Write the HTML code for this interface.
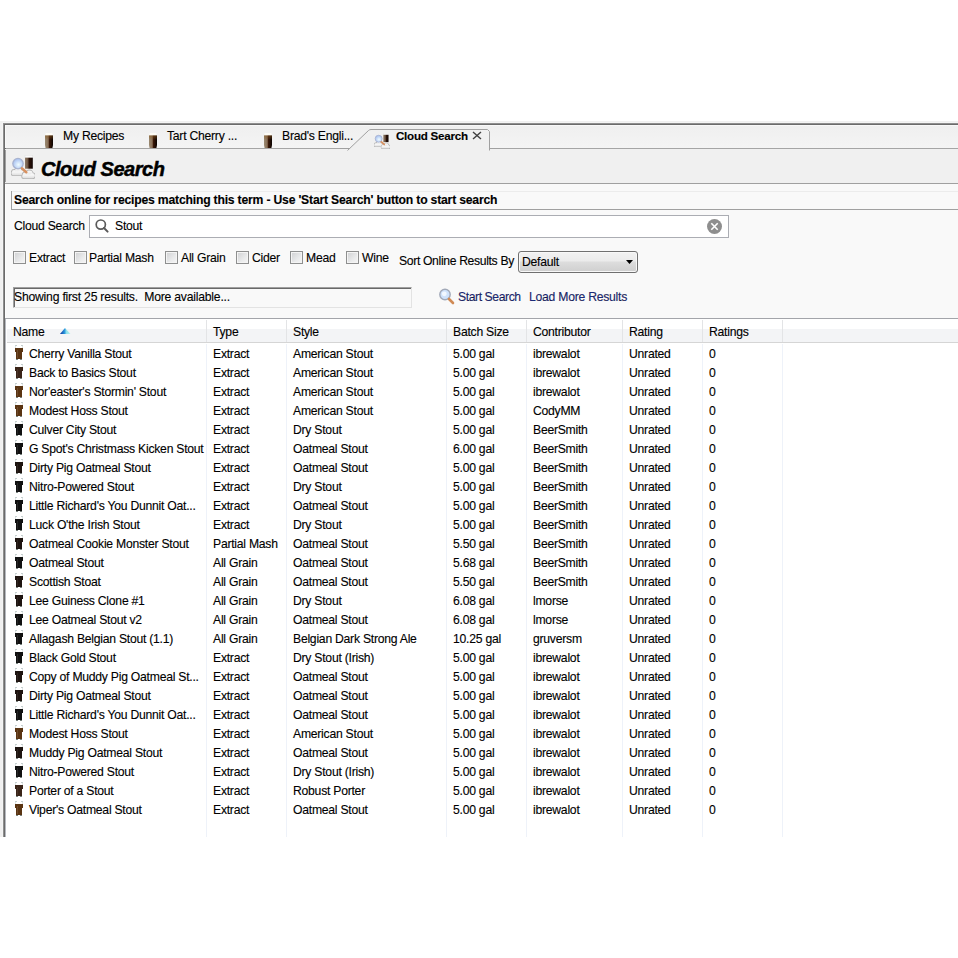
<!DOCTYPE html>
<html><head><meta charset="utf-8">
<style>
html,body{margin:0;padding:0;}
body{width:958px;height:958px;position:relative;overflow:hidden;background:#fff;font-family:"Liberation Sans",sans-serif;font-size:12.2px;letter-spacing:-0.25px;color:#000;}
.ab{position:absolute;}
.t{position:absolute;white-space:pre;line-height:14px;-webkit-text-stroke:0.12px #000;}
.b{font-weight:bold;}
.cb{position:absolute;width:11px;height:11px;border:1px solid #8e8f8f;background:linear-gradient(135deg,#cfd0d2 0%,#e9eaeb 60%,#f6f6f6 100%);box-shadow:inset 0 0 0 1px #f4f4f4;}
</style></head><body>

<div class="ab" style="left:0;top:121px;width:958px;height:716px;background:#f0f0f0"></div>
<div class="ab" style="left:2px;top:122px;width:956px;height:715px;background:#f4f4f4"></div>
<div class="ab" style="left:3px;top:123px;width:955px;height:714px;background:#8f8f8f"></div>
<div class="ab" style="left:4px;top:124px;width:954px;height:713px;background:#6b6b6b"></div>
<div class="ab" style="left:5px;top:125px;width:953px;height:23px;background:linear-gradient(#efefef,#f4f4f4);box-shadow:inset 1px 1px 0 #f8f8f8"></div>
<div class="ab" style="left:6px;top:148px;width:952px;height:1px;background:#a5a5a5"></div>
<div class="ab" style="left:5px;top:149px;width:953px;height:34px;background:#f0f0f0"></div>
<div class="ab" style="left:5px;top:150px;width:1px;height:32px;background:#a0a0a0"></div>
<div class="ab" style="left:5px;top:183px;width:953px;height:1px;background:#a0a0a0"></div>
<div class="ab" style="left:5px;top:184px;width:953px;height:134px;background:#f9f9f9;box-shadow:inset 1px 0 0 #fdfdfd"></div>
<div class="ab" style="left:5px;top:318px;width:953px;height:1px;background:#a3a5aa"></div>
<div class="ab" style="left:5px;top:319px;width:953px;height:518px;background:#fff"></div>
<div class="ab" style="left:5px;top:319px;width:1px;height:518px;background:#b6b9bf"></div>
<svg class="ab" style="left:340px;top:126px" width="160" height="26" viewBox="0 0 160 26">
<path d="M7.5 24.5 L28.5 4.5 Q29.5 3.5 31 3.5 H147.5 L149.5 5.5 V24.5Z" fill="#f0f0f0"/>
<path d="M0 22.5 H9.6 M7.5 24.5 L28.5 4.5 Q29.5 3.5 31 3.5 H147.5 L149.5 5.5 V24.5 M149.5 22.5 H160" fill="none" stroke="#a0a0a0" stroke-width="1"/>
</svg>
<svg class="ab" style="left:45px;top:133px" width="8" height="15" viewBox="0 0 8 15">
<defs><linearGradient id="tb45" x1="0" x2="1"><stop offset="0" stop-color="#9a8a72"/><stop offset=".4" stop-color="#8a7058"/><stop offset=".55" stop-color="#3a1808"/><stop offset="1" stop-color="#0a0301"/></linearGradient>
<linearGradient id="tv45" x1="0" y1="0" x2="0" y2="1"><stop offset="0" stop-color="#8a5a20" stop-opacity=".55"/><stop offset=".35" stop-color="#8a5a20" stop-opacity="0"/></linearGradient></defs>
<rect x="0.5" y="0" width="7" height="2.6" rx="1" fill="#fdfcf6"/>
<path d="M0 2.4 H8 V12 L7.4 15 H0.6 L0 12Z" fill="url(#tb45)"/>
<path d="M0 2.4 H8 V12 L7.4 15 H0.6 L0 12Z" fill="url(#tv45)"/>
</svg>
<svg class="ab" style="left:149px;top:133px" width="8" height="15" viewBox="0 0 8 15">
<defs><linearGradient id="tb149" x1="0" x2="1"><stop offset="0" stop-color="#9a8a72"/><stop offset=".4" stop-color="#8a7058"/><stop offset=".55" stop-color="#3a1808"/><stop offset="1" stop-color="#0a0301"/></linearGradient>
<linearGradient id="tv149" x1="0" y1="0" x2="0" y2="1"><stop offset="0" stop-color="#8a5a20" stop-opacity=".55"/><stop offset=".35" stop-color="#8a5a20" stop-opacity="0"/></linearGradient></defs>
<rect x="0.5" y="0" width="7" height="2.6" rx="1" fill="#fdfcf6"/>
<path d="M0 2.4 H8 V12 L7.4 15 H0.6 L0 12Z" fill="url(#tb149)"/>
<path d="M0 2.4 H8 V12 L7.4 15 H0.6 L0 12Z" fill="url(#tv149)"/>
</svg>
<svg class="ab" style="left:264px;top:133px" width="8" height="15" viewBox="0 0 8 15">
<defs><linearGradient id="tb264" x1="0" x2="1"><stop offset="0" stop-color="#9a8a72"/><stop offset=".4" stop-color="#8a7058"/><stop offset=".55" stop-color="#3a1808"/><stop offset="1" stop-color="#0a0301"/></linearGradient>
<linearGradient id="tv264" x1="0" y1="0" x2="0" y2="1"><stop offset="0" stop-color="#8a5a20" stop-opacity=".55"/><stop offset=".35" stop-color="#8a5a20" stop-opacity="0"/></linearGradient></defs>
<rect x="0.5" y="0" width="7" height="2.6" rx="1" fill="#fdfcf6"/>
<path d="M0 2.4 H8 V12 L7.4 15 H0.6 L0 12Z" fill="url(#tb264)"/>
<path d="M0 2.4 H8 V12 L7.4 15 H0.6 L0 12Z" fill="url(#tv264)"/>
</svg>
<div class="t" style="left:63px;top:129px">My Recipes</div>
<div class="t" style="left:167px;top:129px">Tart Cherry ...</div>
<div class="t" style="left:282px;top:129px">Brad&#39;s Engli...</div>
<div class="t b" style="left:396px;top:129px;font-size:11.6px">Cloud Search</div>
<svg class="ab" style="left:472px;top:131px" width="10" height="10" viewBox="0 0 10 10"><path d="M1 1 L9 8 M9 1 L1 8" stroke="#404040" stroke-width="1.4"/></svg>
<svg class="ab" style="left:11px;top:155px" width="24" height="24" viewBox="0 0 24 24">
<defs><radialGradient id="lg11" cx=".55" cy=".6" r=".6"><stop offset="0" stop-color="#effcff"/><stop offset="1" stop-color="#a3bdf0"/></radialGradient>
<linearGradient id="bg11" x1="0" x2="1"><stop offset="0" stop-color="#8e7a66"/><stop offset=".4" stop-color="#6a5240"/><stop offset=".5" stop-color="#2e1408"/><stop offset="1" stop-color="#120604"/></linearGradient>
<linearGradient id="cg11" x1="0" y1="0" x2="0" y2="1"><stop offset="0" stop-color="#fafafa"/><stop offset="1" stop-color="#dedede"/></linearGradient></defs>
<circle cx="3.2" cy="17.3" r="3.3" fill="#b4b4b4"/><circle cx="7.2" cy="16.2" r="4.1000000000000005" fill="#b4b4b4"/><circle cx="10.6" cy="17.6" r="3.3" fill="#b4b4b4"/><rect x="-0.30000000000000004" y="16.6" width="14.200000000000001" height="4.5" rx="2.7" fill="#b4b4b4"/><circle cx="3.2" cy="17.3" r="2.4" fill="url(#cg11)"/><circle cx="7.2" cy="16.2" r="3.2" fill="url(#cg11)"/><circle cx="10.6" cy="17.6" r="2.4" fill="url(#cg11)"/><rect x="0.6" y="16.6" width="12.4" height="3.6" rx="1.8" fill="url(#cg11)"/>
<rect x="14" y="0.3" width="7.8" height="2.5" fill="#fbfbfb" stroke="#dcdcdc" stroke-width=".4"/>
<rect x="14" y="2.7" width="7.8" height="11" fill="url(#bg11)"/>
<circle cx="14.2" cy="20.0" r="3.5" fill="#b4b4b4"/><circle cx="18.3" cy="18.8" r="4.3" fill="#b4b4b4"/><circle cx="21.6" cy="20.6" r="3.1999999999999997" fill="#b4b4b4"/><rect x="10.299999999999999" y="19.6" width="14.0" height="4.5" rx="2.7" fill="#b4b4b4"/><circle cx="14.2" cy="20.0" r="2.6" fill="url(#cg11)"/><circle cx="18.3" cy="18.8" r="3.4" fill="url(#cg11)"/><circle cx="21.6" cy="20.6" r="2.3" fill="url(#cg11)"/><rect x="11.2" y="19.6" width="12.2" height="3.6" rx="1.8" fill="url(#cg11)"/>
<circle cx="7" cy="8.6" r="5.2" fill="url(#lg11)" stroke="#a9b3cf" stroke-width="1.3"/>
<path d="M11 13.4 L15.3 17.2" stroke="#d89160" stroke-width="2.6" stroke-linecap="round"/>
</svg>
<svg class="ab" style="left:374px;top:133px" width="16.000799999999998" height="16.000799999999998" viewBox="0 0 24 24">
<defs><radialGradient id="lg374" cx=".55" cy=".6" r=".6"><stop offset="0" stop-color="#effcff"/><stop offset="1" stop-color="#a3bdf0"/></radialGradient>
<linearGradient id="bg374" x1="0" x2="1"><stop offset="0" stop-color="#8e7a66"/><stop offset=".4" stop-color="#6a5240"/><stop offset=".5" stop-color="#2e1408"/><stop offset="1" stop-color="#120604"/></linearGradient>
<linearGradient id="cg374" x1="0" y1="0" x2="0" y2="1"><stop offset="0" stop-color="#fafafa"/><stop offset="1" stop-color="#dedede"/></linearGradient></defs>
<circle cx="3.2" cy="17.3" r="3.3" fill="#b4b4b4"/><circle cx="7.2" cy="16.2" r="4.1000000000000005" fill="#b4b4b4"/><circle cx="10.6" cy="17.6" r="3.3" fill="#b4b4b4"/><rect x="-0.30000000000000004" y="16.6" width="14.200000000000001" height="4.5" rx="2.7" fill="#b4b4b4"/><circle cx="3.2" cy="17.3" r="2.4" fill="url(#cg374)"/><circle cx="7.2" cy="16.2" r="3.2" fill="url(#cg374)"/><circle cx="10.6" cy="17.6" r="2.4" fill="url(#cg374)"/><rect x="0.6" y="16.6" width="12.4" height="3.6" rx="1.8" fill="url(#cg374)"/>
<rect x="14" y="0.3" width="7.8" height="2.5" fill="#fbfbfb" stroke="#dcdcdc" stroke-width=".4"/>
<rect x="14" y="2.7" width="7.8" height="11" fill="url(#bg374)"/>
<circle cx="14.2" cy="20.0" r="3.5" fill="#b4b4b4"/><circle cx="18.3" cy="18.8" r="4.3" fill="#b4b4b4"/><circle cx="21.6" cy="20.6" r="3.1999999999999997" fill="#b4b4b4"/><rect x="10.299999999999999" y="19.6" width="14.0" height="4.5" rx="2.7" fill="#b4b4b4"/><circle cx="14.2" cy="20.0" r="2.6" fill="url(#cg374)"/><circle cx="18.3" cy="18.8" r="3.4" fill="url(#cg374)"/><circle cx="21.6" cy="20.6" r="2.3" fill="url(#cg374)"/><rect x="11.2" y="19.6" width="12.2" height="3.6" rx="1.8" fill="url(#cg374)"/>
<circle cx="7" cy="8.6" r="5.2" fill="url(#lg374)" stroke="#a9b3cf" stroke-width="1.3"/>
<path d="M11 13.4 L15.3 17.2" stroke="#d89160" stroke-width="2.6" stroke-linecap="round"/>
</svg>
<div class="t b" style="left:41px;top:158px;font-size:20px;line-height:22px;font-style:italic;letter-spacing:-0.45px;-webkit-text-stroke:0.5px #000">Cloud Search</div>
<div class="ab" style="left:11px;top:191px;width:947px;height:1px;background:#ececec"></div>
<div class="ab" style="left:11px;top:191px;width:1px;height:18px;background:#a0a0a0"></div>
<div class="ab" style="left:11px;top:209px;width:947px;height:1px;background:#a0a0a0"></div>
<div class="t b" style="left:14px;top:193px;letter-spacing:-0.2px">Search online for recipes matching this term - Use &#39;Start Search&#39; button to start search</div>
<div class="t" style="left:14px;top:219px">Cloud Search</div>
<div class="ab" style="left:89px;top:215px;width:638px;height:21px;border:1px solid #abadb3;background:#fff"></div>
<svg class="ab" style="left:94px;top:218px" width="16" height="16" viewBox="0 0 16 16">
<circle cx="6.8" cy="6.6" r="4.6" fill="none" stroke="#5a5a5a" stroke-width="1.7"/>
<path d="M10 10 L13.6 13.6" stroke="#5a5a5a" stroke-width="2" stroke-linecap="round"/></svg>
<div class="t" style="left:115px;top:219px">Stout</div>
<svg class="ab" style="left:706px;top:218px" width="17" height="17" viewBox="0 0 17 17">
<circle cx="8.5" cy="8.5" r="7.5" fill="#8e8e8e"/>
<path d="M5.3 5.3 L11.7 11.7 M11.7 5.3 L5.3 11.7" stroke="#fff" stroke-width="1.6"/></svg>
<div class="cb" style="left:13px;top:251px"></div>
<div class="t" style="left:29px;top:251px">Extract</div>
<div class="cb" style="left:74px;top:251px"></div>
<div class="t" style="left:89px;top:251px">Partial Mash</div>
<div class="cb" style="left:165px;top:251px"></div>
<div class="t" style="left:181px;top:251px">All Grain</div>
<div class="cb" style="left:236px;top:251px"></div>
<div class="t" style="left:252px;top:251px">Cider</div>
<div class="cb" style="left:290px;top:251px"></div>
<div class="t" style="left:306px;top:251px">Mead</div>
<div class="cb" style="left:346px;top:251px"></div>
<div class="t" style="left:362px;top:251px">Wine</div>
<div class="t" style="left:399px;top:254px;letter-spacing:-0.35px">Sort Online Results By</div>
<div class="ab" style="left:518px;top:251px;width:118px;height:20px;border:1px solid #707070;border-radius:3px;background:linear-gradient(#f2f2f2 0%,#ebebeb 45%,#dddddd 50%,#cfcfcf 100%);box-shadow:inset 0 0 0 1px #f8f8f8"></div>
<div class="t" style="left:522px;top:255px">Default</div>
<svg class="ab" style="left:626px;top:260px" width="7" height="4" viewBox="0 0 7 4"><path d="M0 0H7L3.5 4Z" fill="#000"/></svg>
<div class="ab" style="left:13px;top:287px;width:397px;height:19px;border-top:1px solid #a0a0a0;border-left:1px solid #a0a0a0;border-bottom:1px solid #e3e3e3;border-right:1px solid #e3e3e3;background:#f9f9f9;box-shadow:inset 1px 1px 0 #696969"></div>
<div class="t" style="left:14px;top:290px;letter-spacing:-0.22px">Showing first 25 results.  More available...</div>
<svg class="ab" style="left:438px;top:288px" width="17" height="17" viewBox="0 0 17 17">
<circle cx="7" cy="6.5" r="5.2" fill="#cfe2fb" stroke="#a2a9b8" stroke-width="1.4"/>
<circle cx="6.3" cy="5.8" r="2.4" fill="#f2f8ff"/>
<path d="M11 11 L15 15" stroke="#d08a55" stroke-width="2.6" stroke-linecap="round"/></svg>
<div class="t" style="left:458px;top:290px;color:#1b2a78;letter-spacing:-0.42px">Start Search</div>
<div class="t" style="left:529px;top:290px;color:#1b2a78">Load More Results</div>
<div class="ab" style="left:7px;top:319px;width:951px;height:23px;background:#fff"></div>
<div class="ab" style="left:7px;top:329px;width:951px;height:13px;background:#f3f4f6"></div>
<div class="ab" style="left:7px;top:342px;width:951px;height:1px;background:#d5d5d5"></div>
<div class="ab" style="left:206px;top:320px;width:1px;height:22px;background:#e3e4e6"></div>
<div class="ab" style="left:206px;top:344px;width:1px;height:493px;background:#eef2f9"></div>
<div class="ab" style="left:286px;top:320px;width:1px;height:22px;background:#e3e4e6"></div>
<div class="ab" style="left:286px;top:344px;width:1px;height:493px;background:#eef2f9"></div>
<div class="ab" style="left:446px;top:320px;width:1px;height:22px;background:#e3e4e6"></div>
<div class="ab" style="left:446px;top:344px;width:1px;height:493px;background:#eef2f9"></div>
<div class="ab" style="left:526px;top:320px;width:1px;height:22px;background:#e3e4e6"></div>
<div class="ab" style="left:526px;top:344px;width:1px;height:493px;background:#eef2f9"></div>
<div class="ab" style="left:622px;top:320px;width:1px;height:22px;background:#e3e4e6"></div>
<div class="ab" style="left:622px;top:344px;width:1px;height:493px;background:#eef2f9"></div>
<div class="ab" style="left:702px;top:320px;width:1px;height:22px;background:#e3e4e6"></div>
<div class="ab" style="left:702px;top:344px;width:1px;height:493px;background:#eef2f9"></div>
<div class="ab" style="left:782px;top:320px;width:1px;height:22px;background:#e3e4e6"></div>
<div class="ab" style="left:782px;top:344px;width:1px;height:493px;background:#eef2f9"></div>
<div class="t" style="left:13px;top:325px">Name</div>
<div class="t" style="left:213px;top:325px">Type</div>
<div class="t" style="left:293px;top:325px">Style</div>
<div class="t" style="left:453px;top:325px">Batch Size</div>
<div class="t" style="left:533px;top:325px">Contributor</div>
<div class="t" style="left:629px;top:325px">Rating</div>
<div class="t" style="left:709px;top:325px">Ratings</div>
<svg class="ab" style="left:60px;top:327px" width="11" height="8" viewBox="0 0 11 8"><defs><linearGradient id="sa" x1="0" x2="1"><stop offset="0" stop-color="#0a2f9a"/><stop offset=".45" stop-color="#2d9be0"/><stop offset=".6" stop-color="#8fe0ea"/><stop offset="1" stop-color="#b9f2ee"/></linearGradient></defs><path d="M0 7 L5 1 L10.5 7Z" fill="url(#sa)"/></svg>
<svg class="ab" style="left:15px;top:345px" width="8" height="15" viewBox="0 0 8 15">
<rect x="0" y="0" width="8" height="3" fill="#fff"/><rect x="0" y="0" width="2" height="1" fill="#c5cfcf"/><rect x="6" y="0" width="2" height="1" fill="#c5cfcf"/><rect x="0" y="1" width="1" height="2" fill="#dfe5e5"/><rect x="7" y="1" width="1" height="2" fill="#dfe5e5"/>
<rect x="0" y="3" width="8" height="4" fill="#5a3412"/><rect x="1" y="7" width="6" height="7" fill="#5a3412"/>
<rect x="2" y="5" width="1" height="8" fill="#6e4a2c"/>
<rect x="1" y="14" width="2" height="1" fill="#7a8480"/><rect x="5" y="14" width="2" height="1" fill="#7a8480"/>
</svg>
<div class="t" style="left:29px;top:347px">Cherry Vanilla Stout</div>
<div class="t" style="left:213px;top:347px">Extract</div>
<div class="t" style="left:293px;top:347px">American Stout</div>
<div class="t" style="left:453px;top:347px">5.00 gal</div>
<div class="t" style="left:533px;top:347px">ibrewalot</div>
<div class="t" style="left:629px;top:347px">Unrated</div>
<div class="t" style="left:709px;top:347px">0</div>
<svg class="ab" style="left:15px;top:364px" width="8" height="15" viewBox="0 0 8 15">
<rect x="0" y="0" width="8" height="3" fill="#fff"/><rect x="0" y="0" width="2" height="1" fill="#c5cfcf"/><rect x="6" y="0" width="2" height="1" fill="#c5cfcf"/><rect x="0" y="1" width="1" height="2" fill="#dfe5e5"/><rect x="7" y="1" width="1" height="2" fill="#dfe5e5"/>
<rect x="0" y="3" width="8" height="4" fill="#3a2418"/><rect x="1" y="7" width="6" height="7" fill="#3a2418"/>
<rect x="2" y="5" width="1" height="8" fill="#4a3428"/>
<rect x="1" y="14" width="2" height="1" fill="#7a8480"/><rect x="5" y="14" width="2" height="1" fill="#7a8480"/>
</svg>
<div class="t" style="left:29px;top:366px">Back to Basics Stout</div>
<div class="t" style="left:213px;top:366px">Extract</div>
<div class="t" style="left:293px;top:366px">American Stout</div>
<div class="t" style="left:453px;top:366px">5.00 gal</div>
<div class="t" style="left:533px;top:366px">ibrewalot</div>
<div class="t" style="left:629px;top:366px">Unrated</div>
<div class="t" style="left:709px;top:366px">0</div>
<svg class="ab" style="left:15px;top:383px" width="8" height="15" viewBox="0 0 8 15">
<rect x="0" y="0" width="8" height="3" fill="#fff"/><rect x="0" y="0" width="2" height="1" fill="#c5cfcf"/><rect x="6" y="0" width="2" height="1" fill="#c5cfcf"/><rect x="0" y="1" width="1" height="2" fill="#dfe5e5"/><rect x="7" y="1" width="1" height="2" fill="#dfe5e5"/>
<rect x="0" y="3" width="8" height="4" fill="#5a3412"/><rect x="1" y="7" width="6" height="7" fill="#5a3412"/>
<rect x="2" y="5" width="1" height="8" fill="#6e4a2c"/>
<rect x="1" y="14" width="2" height="1" fill="#7a8480"/><rect x="5" y="14" width="2" height="1" fill="#7a8480"/>
</svg>
<div class="t" style="left:29px;top:385px">Nor&#39;easter&#39;s Stormin&#39; Stout</div>
<div class="t" style="left:213px;top:385px">Extract</div>
<div class="t" style="left:293px;top:385px">American Stout</div>
<div class="t" style="left:453px;top:385px">5.00 gal</div>
<div class="t" style="left:533px;top:385px">ibrewalot</div>
<div class="t" style="left:629px;top:385px">Unrated</div>
<div class="t" style="left:709px;top:385px">0</div>
<svg class="ab" style="left:15px;top:402px" width="8" height="15" viewBox="0 0 8 15">
<rect x="0" y="0" width="8" height="3" fill="#fff"/><rect x="0" y="0" width="2" height="1" fill="#c5cfcf"/><rect x="6" y="0" width="2" height="1" fill="#c5cfcf"/><rect x="0" y="1" width="1" height="2" fill="#dfe5e5"/><rect x="7" y="1" width="1" height="2" fill="#dfe5e5"/>
<rect x="0" y="3" width="8" height="4" fill="#5a3412"/><rect x="1" y="7" width="6" height="7" fill="#5a3412"/>
<rect x="2" y="5" width="1" height="8" fill="#6e4a2c"/>
<rect x="1" y="14" width="2" height="1" fill="#7a8480"/><rect x="5" y="14" width="2" height="1" fill="#7a8480"/>
</svg>
<div class="t" style="left:29px;top:404px">Modest Hoss Stout</div>
<div class="t" style="left:213px;top:404px">Extract</div>
<div class="t" style="left:293px;top:404px">American Stout</div>
<div class="t" style="left:453px;top:404px">5.00 gal</div>
<div class="t" style="left:533px;top:404px">CodyMM</div>
<div class="t" style="left:629px;top:404px">Unrated</div>
<div class="t" style="left:709px;top:404px">0</div>
<svg class="ab" style="left:15px;top:421px" width="8" height="15" viewBox="0 0 8 15">
<rect x="0" y="0" width="8" height="3" fill="#fff"/><rect x="0" y="0" width="2" height="1" fill="#c5cfcf"/><rect x="6" y="0" width="2" height="1" fill="#c5cfcf"/><rect x="0" y="1" width="1" height="2" fill="#dfe5e5"/><rect x="7" y="1" width="1" height="2" fill="#dfe5e5"/>
<rect x="0" y="3" width="8" height="4" fill="#111111"/><rect x="1" y="7" width="6" height="7" fill="#111111"/>
<rect x="2" y="5" width="1" height="8" fill="#262626"/>
<rect x="1" y="14" width="2" height="1" fill="#7a8480"/><rect x="5" y="14" width="2" height="1" fill="#7a8480"/>
</svg>
<div class="t" style="left:29px;top:423px">Culver City Stout</div>
<div class="t" style="left:213px;top:423px">Extract</div>
<div class="t" style="left:293px;top:423px">Dry Stout</div>
<div class="t" style="left:453px;top:423px">5.00 gal</div>
<div class="t" style="left:533px;top:423px">BeerSmith</div>
<div class="t" style="left:629px;top:423px">Unrated</div>
<div class="t" style="left:709px;top:423px">0</div>
<svg class="ab" style="left:15px;top:440px" width="8" height="15" viewBox="0 0 8 15">
<rect x="0" y="0" width="8" height="3" fill="#fff"/><rect x="0" y="0" width="2" height="1" fill="#c5cfcf"/><rect x="6" y="0" width="2" height="1" fill="#c5cfcf"/><rect x="0" y="1" width="1" height="2" fill="#dfe5e5"/><rect x="7" y="1" width="1" height="2" fill="#dfe5e5"/>
<rect x="0" y="3" width="8" height="4" fill="#111111"/><rect x="1" y="7" width="6" height="7" fill="#111111"/>
<rect x="2" y="5" width="1" height="8" fill="#262626"/>
<rect x="1" y="14" width="2" height="1" fill="#7a8480"/><rect x="5" y="14" width="2" height="1" fill="#7a8480"/>
</svg>
<div class="t" style="left:29px;top:442px">G Spot&#39;s Christmass Kicken Stout</div>
<div class="t" style="left:213px;top:442px">Extract</div>
<div class="t" style="left:293px;top:442px">Oatmeal Stout</div>
<div class="t" style="left:453px;top:442px">6.00 gal</div>
<div class="t" style="left:533px;top:442px">BeerSmith</div>
<div class="t" style="left:629px;top:442px">Unrated</div>
<div class="t" style="left:709px;top:442px">0</div>
<svg class="ab" style="left:15px;top:459px" width="8" height="15" viewBox="0 0 8 15">
<rect x="0" y="0" width="8" height="3" fill="#fff"/><rect x="0" y="0" width="2" height="1" fill="#c5cfcf"/><rect x="6" y="0" width="2" height="1" fill="#c5cfcf"/><rect x="0" y="1" width="1" height="2" fill="#dfe5e5"/><rect x="7" y="1" width="1" height="2" fill="#dfe5e5"/>
<rect x="0" y="3" width="8" height="4" fill="#1e1410"/><rect x="1" y="7" width="6" height="7" fill="#1e1410"/>
<rect x="2" y="5" width="1" height="8" fill="#2e2420"/>
<rect x="1" y="14" width="2" height="1" fill="#7a8480"/><rect x="5" y="14" width="2" height="1" fill="#7a8480"/>
</svg>
<div class="t" style="left:29px;top:461px">Dirty Pig Oatmeal Stout</div>
<div class="t" style="left:213px;top:461px">Extract</div>
<div class="t" style="left:293px;top:461px">Oatmeal Stout</div>
<div class="t" style="left:453px;top:461px">5.00 gal</div>
<div class="t" style="left:533px;top:461px">BeerSmith</div>
<div class="t" style="left:629px;top:461px">Unrated</div>
<div class="t" style="left:709px;top:461px">0</div>
<svg class="ab" style="left:15px;top:478px" width="8" height="15" viewBox="0 0 8 15">
<rect x="0" y="0" width="8" height="3" fill="#fff"/><rect x="0" y="0" width="2" height="1" fill="#c5cfcf"/><rect x="6" y="0" width="2" height="1" fill="#c5cfcf"/><rect x="0" y="1" width="1" height="2" fill="#dfe5e5"/><rect x="7" y="1" width="1" height="2" fill="#dfe5e5"/>
<rect x="0" y="3" width="8" height="4" fill="#111111"/><rect x="1" y="7" width="6" height="7" fill="#111111"/>
<rect x="2" y="5" width="1" height="8" fill="#262626"/>
<rect x="1" y="14" width="2" height="1" fill="#7a8480"/><rect x="5" y="14" width="2" height="1" fill="#7a8480"/>
</svg>
<div class="t" style="left:29px;top:480px">Nitro-Powered Stout</div>
<div class="t" style="left:213px;top:480px">Extract</div>
<div class="t" style="left:293px;top:480px">Dry Stout</div>
<div class="t" style="left:453px;top:480px">5.00 gal</div>
<div class="t" style="left:533px;top:480px">BeerSmith</div>
<div class="t" style="left:629px;top:480px">Unrated</div>
<div class="t" style="left:709px;top:480px">0</div>
<svg class="ab" style="left:15px;top:497px" width="8" height="15" viewBox="0 0 8 15">
<rect x="0" y="0" width="8" height="3" fill="#fff"/><rect x="0" y="0" width="2" height="1" fill="#c5cfcf"/><rect x="6" y="0" width="2" height="1" fill="#c5cfcf"/><rect x="0" y="1" width="1" height="2" fill="#dfe5e5"/><rect x="7" y="1" width="1" height="2" fill="#dfe5e5"/>
<rect x="0" y="3" width="8" height="4" fill="#111111"/><rect x="1" y="7" width="6" height="7" fill="#111111"/>
<rect x="2" y="5" width="1" height="8" fill="#262626"/>
<rect x="1" y="14" width="2" height="1" fill="#7a8480"/><rect x="5" y="14" width="2" height="1" fill="#7a8480"/>
</svg>
<div class="t" style="left:29px;top:499px">Little Richard&#39;s You Dunnit Oat...</div>
<div class="t" style="left:213px;top:499px">Extract</div>
<div class="t" style="left:293px;top:499px">Oatmeal Stout</div>
<div class="t" style="left:453px;top:499px">5.00 gal</div>
<div class="t" style="left:533px;top:499px">BeerSmith</div>
<div class="t" style="left:629px;top:499px">Unrated</div>
<div class="t" style="left:709px;top:499px">0</div>
<svg class="ab" style="left:15px;top:516px" width="8" height="15" viewBox="0 0 8 15">
<rect x="0" y="0" width="8" height="3" fill="#fff"/><rect x="0" y="0" width="2" height="1" fill="#c5cfcf"/><rect x="6" y="0" width="2" height="1" fill="#c5cfcf"/><rect x="0" y="1" width="1" height="2" fill="#dfe5e5"/><rect x="7" y="1" width="1" height="2" fill="#dfe5e5"/>
<rect x="0" y="3" width="8" height="4" fill="#111111"/><rect x="1" y="7" width="6" height="7" fill="#111111"/>
<rect x="2" y="5" width="1" height="8" fill="#262626"/>
<rect x="1" y="14" width="2" height="1" fill="#7a8480"/><rect x="5" y="14" width="2" height="1" fill="#7a8480"/>
</svg>
<div class="t" style="left:29px;top:518px">Luck O&#39;the Irish Stout</div>
<div class="t" style="left:213px;top:518px">Extract</div>
<div class="t" style="left:293px;top:518px">Dry Stout</div>
<div class="t" style="left:453px;top:518px">5.00 gal</div>
<div class="t" style="left:533px;top:518px">BeerSmith</div>
<div class="t" style="left:629px;top:518px">Unrated</div>
<div class="t" style="left:709px;top:518px">0</div>
<svg class="ab" style="left:15px;top:535px" width="8" height="15" viewBox="0 0 8 15">
<rect x="0" y="0" width="8" height="3" fill="#fff"/><rect x="0" y="0" width="2" height="1" fill="#c5cfcf"/><rect x="6" y="0" width="2" height="1" fill="#c5cfcf"/><rect x="0" y="1" width="1" height="2" fill="#dfe5e5"/><rect x="7" y="1" width="1" height="2" fill="#dfe5e5"/>
<rect x="0" y="3" width="8" height="4" fill="#1e1410"/><rect x="1" y="7" width="6" height="7" fill="#1e1410"/>
<rect x="2" y="5" width="1" height="8" fill="#2e2420"/>
<rect x="1" y="14" width="2" height="1" fill="#7a8480"/><rect x="5" y="14" width="2" height="1" fill="#7a8480"/>
</svg>
<div class="t" style="left:29px;top:537px">Oatmeal Cookie Monster Stout</div>
<div class="t" style="left:213px;top:537px">Partial Mash</div>
<div class="t" style="left:293px;top:537px">Oatmeal Stout</div>
<div class="t" style="left:453px;top:537px">5.50 gal</div>
<div class="t" style="left:533px;top:537px">BeerSmith</div>
<div class="t" style="left:629px;top:537px">Unrated</div>
<div class="t" style="left:709px;top:537px">0</div>
<svg class="ab" style="left:15px;top:554px" width="8" height="15" viewBox="0 0 8 15">
<rect x="0" y="0" width="8" height="3" fill="#fff"/><rect x="0" y="0" width="2" height="1" fill="#c5cfcf"/><rect x="6" y="0" width="2" height="1" fill="#c5cfcf"/><rect x="0" y="1" width="1" height="2" fill="#dfe5e5"/><rect x="7" y="1" width="1" height="2" fill="#dfe5e5"/>
<rect x="0" y="3" width="8" height="4" fill="#111111"/><rect x="1" y="7" width="6" height="7" fill="#111111"/>
<rect x="2" y="5" width="1" height="8" fill="#262626"/>
<rect x="1" y="14" width="2" height="1" fill="#7a8480"/><rect x="5" y="14" width="2" height="1" fill="#7a8480"/>
</svg>
<div class="t" style="left:29px;top:556px">Oatmeal Stout</div>
<div class="t" style="left:213px;top:556px">All Grain</div>
<div class="t" style="left:293px;top:556px">Oatmeal Stout</div>
<div class="t" style="left:453px;top:556px">5.68 gal</div>
<div class="t" style="left:533px;top:556px">BeerSmith</div>
<div class="t" style="left:629px;top:556px">Unrated</div>
<div class="t" style="left:709px;top:556px">0</div>
<svg class="ab" style="left:15px;top:573px" width="8" height="15" viewBox="0 0 8 15">
<rect x="0" y="0" width="8" height="3" fill="#fff"/><rect x="0" y="0" width="2" height="1" fill="#c5cfcf"/><rect x="6" y="0" width="2" height="1" fill="#c5cfcf"/><rect x="0" y="1" width="1" height="2" fill="#dfe5e5"/><rect x="7" y="1" width="1" height="2" fill="#dfe5e5"/>
<rect x="0" y="3" width="8" height="4" fill="#1e1410"/><rect x="1" y="7" width="6" height="7" fill="#1e1410"/>
<rect x="2" y="5" width="1" height="8" fill="#2e2420"/>
<rect x="1" y="14" width="2" height="1" fill="#7a8480"/><rect x="5" y="14" width="2" height="1" fill="#7a8480"/>
</svg>
<div class="t" style="left:29px;top:575px">Scottish Stoat</div>
<div class="t" style="left:213px;top:575px">All Grain</div>
<div class="t" style="left:293px;top:575px">Oatmeal Stout</div>
<div class="t" style="left:453px;top:575px">5.50 gal</div>
<div class="t" style="left:533px;top:575px">BeerSmith</div>
<div class="t" style="left:629px;top:575px">Unrated</div>
<div class="t" style="left:709px;top:575px">0</div>
<svg class="ab" style="left:15px;top:592px" width="8" height="15" viewBox="0 0 8 15">
<rect x="0" y="0" width="8" height="3" fill="#fff"/><rect x="0" y="0" width="2" height="1" fill="#c5cfcf"/><rect x="6" y="0" width="2" height="1" fill="#c5cfcf"/><rect x="0" y="1" width="1" height="2" fill="#dfe5e5"/><rect x="7" y="1" width="1" height="2" fill="#dfe5e5"/>
<rect x="0" y="3" width="8" height="4" fill="#1e1410"/><rect x="1" y="7" width="6" height="7" fill="#1e1410"/>
<rect x="2" y="5" width="1" height="8" fill="#2e2420"/>
<rect x="1" y="14" width="2" height="1" fill="#7a8480"/><rect x="5" y="14" width="2" height="1" fill="#7a8480"/>
</svg>
<div class="t" style="left:29px;top:594px">Lee Guiness Clone #1</div>
<div class="t" style="left:213px;top:594px">All Grain</div>
<div class="t" style="left:293px;top:594px">Dry Stout</div>
<div class="t" style="left:453px;top:594px">6.08 gal</div>
<div class="t" style="left:533px;top:594px">lmorse</div>
<div class="t" style="left:629px;top:594px">Unrated</div>
<div class="t" style="left:709px;top:594px">0</div>
<svg class="ab" style="left:15px;top:611px" width="8" height="15" viewBox="0 0 8 15">
<rect x="0" y="0" width="8" height="3" fill="#fff"/><rect x="0" y="0" width="2" height="1" fill="#c5cfcf"/><rect x="6" y="0" width="2" height="1" fill="#c5cfcf"/><rect x="0" y="1" width="1" height="2" fill="#dfe5e5"/><rect x="7" y="1" width="1" height="2" fill="#dfe5e5"/>
<rect x="0" y="3" width="8" height="4" fill="#111111"/><rect x="1" y="7" width="6" height="7" fill="#111111"/>
<rect x="2" y="5" width="1" height="8" fill="#262626"/>
<rect x="1" y="14" width="2" height="1" fill="#7a8480"/><rect x="5" y="14" width="2" height="1" fill="#7a8480"/>
</svg>
<div class="t" style="left:29px;top:613px">Lee Oatmeal Stout v2</div>
<div class="t" style="left:213px;top:613px">All Grain</div>
<div class="t" style="left:293px;top:613px">Oatmeal Stout</div>
<div class="t" style="left:453px;top:613px">6.08 gal</div>
<div class="t" style="left:533px;top:613px">lmorse</div>
<div class="t" style="left:629px;top:613px">Unrated</div>
<div class="t" style="left:709px;top:613px">0</div>
<svg class="ab" style="left:15px;top:630px" width="8" height="15" viewBox="0 0 8 15">
<rect x="0" y="0" width="8" height="3" fill="#fff"/><rect x="0" y="0" width="2" height="1" fill="#c5cfcf"/><rect x="6" y="0" width="2" height="1" fill="#c5cfcf"/><rect x="0" y="1" width="1" height="2" fill="#dfe5e5"/><rect x="7" y="1" width="1" height="2" fill="#dfe5e5"/>
<rect x="0" y="3" width="8" height="4" fill="#111111"/><rect x="1" y="7" width="6" height="7" fill="#111111"/>
<rect x="2" y="5" width="1" height="8" fill="#262626"/>
<rect x="1" y="14" width="2" height="1" fill="#7a8480"/><rect x="5" y="14" width="2" height="1" fill="#7a8480"/>
</svg>
<div class="t" style="left:29px;top:632px">Allagash Belgian Stout (1.1)</div>
<div class="t" style="left:213px;top:632px">All Grain</div>
<div class="t" style="left:293px;top:632px">Belgian Dark Strong Ale</div>
<div class="t" style="left:453px;top:632px">10.25 gal</div>
<div class="t" style="left:533px;top:632px">gruversm</div>
<div class="t" style="left:629px;top:632px">Unrated</div>
<div class="t" style="left:709px;top:632px">0</div>
<svg class="ab" style="left:15px;top:649px" width="8" height="15" viewBox="0 0 8 15">
<rect x="0" y="0" width="8" height="3" fill="#fff"/><rect x="0" y="0" width="2" height="1" fill="#c5cfcf"/><rect x="6" y="0" width="2" height="1" fill="#c5cfcf"/><rect x="0" y="1" width="1" height="2" fill="#dfe5e5"/><rect x="7" y="1" width="1" height="2" fill="#dfe5e5"/>
<rect x="0" y="3" width="8" height="4" fill="#111111"/><rect x="1" y="7" width="6" height="7" fill="#111111"/>
<rect x="2" y="5" width="1" height="8" fill="#262626"/>
<rect x="1" y="14" width="2" height="1" fill="#7a8480"/><rect x="5" y="14" width="2" height="1" fill="#7a8480"/>
</svg>
<div class="t" style="left:29px;top:651px">Black Gold Stout</div>
<div class="t" style="left:213px;top:651px">Extract</div>
<div class="t" style="left:293px;top:651px">Dry Stout (Irish)</div>
<div class="t" style="left:453px;top:651px">5.00 gal</div>
<div class="t" style="left:533px;top:651px">ibrewalot</div>
<div class="t" style="left:629px;top:651px">Unrated</div>
<div class="t" style="left:709px;top:651px">0</div>
<svg class="ab" style="left:15px;top:668px" width="8" height="15" viewBox="0 0 8 15">
<rect x="0" y="0" width="8" height="3" fill="#fff"/><rect x="0" y="0" width="2" height="1" fill="#c5cfcf"/><rect x="6" y="0" width="2" height="1" fill="#c5cfcf"/><rect x="0" y="1" width="1" height="2" fill="#dfe5e5"/><rect x="7" y="1" width="1" height="2" fill="#dfe5e5"/>
<rect x="0" y="3" width="8" height="4" fill="#1e1410"/><rect x="1" y="7" width="6" height="7" fill="#1e1410"/>
<rect x="2" y="5" width="1" height="8" fill="#2e2420"/>
<rect x="1" y="14" width="2" height="1" fill="#7a8480"/><rect x="5" y="14" width="2" height="1" fill="#7a8480"/>
</svg>
<div class="t" style="left:29px;top:670px">Copy of Muddy Pig Oatmeal St...</div>
<div class="t" style="left:213px;top:670px">Extract</div>
<div class="t" style="left:293px;top:670px">Oatmeal Stout</div>
<div class="t" style="left:453px;top:670px">5.00 gal</div>
<div class="t" style="left:533px;top:670px">ibrewalot</div>
<div class="t" style="left:629px;top:670px">Unrated</div>
<div class="t" style="left:709px;top:670px">0</div>
<svg class="ab" style="left:15px;top:687px" width="8" height="15" viewBox="0 0 8 15">
<rect x="0" y="0" width="8" height="3" fill="#fff"/><rect x="0" y="0" width="2" height="1" fill="#c5cfcf"/><rect x="6" y="0" width="2" height="1" fill="#c5cfcf"/><rect x="0" y="1" width="1" height="2" fill="#dfe5e5"/><rect x="7" y="1" width="1" height="2" fill="#dfe5e5"/>
<rect x="0" y="3" width="8" height="4" fill="#1e1410"/><rect x="1" y="7" width="6" height="7" fill="#1e1410"/>
<rect x="2" y="5" width="1" height="8" fill="#2e2420"/>
<rect x="1" y="14" width="2" height="1" fill="#7a8480"/><rect x="5" y="14" width="2" height="1" fill="#7a8480"/>
</svg>
<div class="t" style="left:29px;top:689px">Dirty Pig Oatmeal Stout</div>
<div class="t" style="left:213px;top:689px">Extract</div>
<div class="t" style="left:293px;top:689px">Oatmeal Stout</div>
<div class="t" style="left:453px;top:689px">5.00 gal</div>
<div class="t" style="left:533px;top:689px">ibrewalot</div>
<div class="t" style="left:629px;top:689px">Unrated</div>
<div class="t" style="left:709px;top:689px">0</div>
<svg class="ab" style="left:15px;top:706px" width="8" height="15" viewBox="0 0 8 15">
<rect x="0" y="0" width="8" height="3" fill="#fff"/><rect x="0" y="0" width="2" height="1" fill="#c5cfcf"/><rect x="6" y="0" width="2" height="1" fill="#c5cfcf"/><rect x="0" y="1" width="1" height="2" fill="#dfe5e5"/><rect x="7" y="1" width="1" height="2" fill="#dfe5e5"/>
<rect x="0" y="3" width="8" height="4" fill="#111111"/><rect x="1" y="7" width="6" height="7" fill="#111111"/>
<rect x="2" y="5" width="1" height="8" fill="#262626"/>
<rect x="1" y="14" width="2" height="1" fill="#7a8480"/><rect x="5" y="14" width="2" height="1" fill="#7a8480"/>
</svg>
<div class="t" style="left:29px;top:708px">Little Richard&#39;s You Dunnit Oat...</div>
<div class="t" style="left:213px;top:708px">Extract</div>
<div class="t" style="left:293px;top:708px">Oatmeal Stout</div>
<div class="t" style="left:453px;top:708px">5.00 gal</div>
<div class="t" style="left:533px;top:708px">ibrewalot</div>
<div class="t" style="left:629px;top:708px">Unrated</div>
<div class="t" style="left:709px;top:708px">0</div>
<svg class="ab" style="left:15px;top:725px" width="8" height="15" viewBox="0 0 8 15">
<rect x="0" y="0" width="8" height="3" fill="#fff"/><rect x="0" y="0" width="2" height="1" fill="#c5cfcf"/><rect x="6" y="0" width="2" height="1" fill="#c5cfcf"/><rect x="0" y="1" width="1" height="2" fill="#dfe5e5"/><rect x="7" y="1" width="1" height="2" fill="#dfe5e5"/>
<rect x="0" y="3" width="8" height="4" fill="#5a3412"/><rect x="1" y="7" width="6" height="7" fill="#5a3412"/>
<rect x="2" y="5" width="1" height="8" fill="#6e4a2c"/>
<rect x="1" y="14" width="2" height="1" fill="#7a8480"/><rect x="5" y="14" width="2" height="1" fill="#7a8480"/>
</svg>
<div class="t" style="left:29px;top:727px">Modest Hoss Stout</div>
<div class="t" style="left:213px;top:727px">Extract</div>
<div class="t" style="left:293px;top:727px">American Stout</div>
<div class="t" style="left:453px;top:727px">5.00 gal</div>
<div class="t" style="left:533px;top:727px">ibrewalot</div>
<div class="t" style="left:629px;top:727px">Unrated</div>
<div class="t" style="left:709px;top:727px">0</div>
<svg class="ab" style="left:15px;top:744px" width="8" height="15" viewBox="0 0 8 15">
<rect x="0" y="0" width="8" height="3" fill="#fff"/><rect x="0" y="0" width="2" height="1" fill="#c5cfcf"/><rect x="6" y="0" width="2" height="1" fill="#c5cfcf"/><rect x="0" y="1" width="1" height="2" fill="#dfe5e5"/><rect x="7" y="1" width="1" height="2" fill="#dfe5e5"/>
<rect x="0" y="3" width="8" height="4" fill="#1e1410"/><rect x="1" y="7" width="6" height="7" fill="#1e1410"/>
<rect x="2" y="5" width="1" height="8" fill="#2e2420"/>
<rect x="1" y="14" width="2" height="1" fill="#7a8480"/><rect x="5" y="14" width="2" height="1" fill="#7a8480"/>
</svg>
<div class="t" style="left:29px;top:746px">Muddy Pig Oatmeal Stout</div>
<div class="t" style="left:213px;top:746px">Extract</div>
<div class="t" style="left:293px;top:746px">Oatmeal Stout</div>
<div class="t" style="left:453px;top:746px">5.00 gal</div>
<div class="t" style="left:533px;top:746px">ibrewalot</div>
<div class="t" style="left:629px;top:746px">Unrated</div>
<div class="t" style="left:709px;top:746px">0</div>
<svg class="ab" style="left:15px;top:763px" width="8" height="15" viewBox="0 0 8 15">
<rect x="0" y="0" width="8" height="3" fill="#fff"/><rect x="0" y="0" width="2" height="1" fill="#c5cfcf"/><rect x="6" y="0" width="2" height="1" fill="#c5cfcf"/><rect x="0" y="1" width="1" height="2" fill="#dfe5e5"/><rect x="7" y="1" width="1" height="2" fill="#dfe5e5"/>
<rect x="0" y="3" width="8" height="4" fill="#111111"/><rect x="1" y="7" width="6" height="7" fill="#111111"/>
<rect x="2" y="5" width="1" height="8" fill="#262626"/>
<rect x="1" y="14" width="2" height="1" fill="#7a8480"/><rect x="5" y="14" width="2" height="1" fill="#7a8480"/>
</svg>
<div class="t" style="left:29px;top:765px">Nitro-Powered Stout</div>
<div class="t" style="left:213px;top:765px">Extract</div>
<div class="t" style="left:293px;top:765px">Dry Stout (Irish)</div>
<div class="t" style="left:453px;top:765px">5.00 gal</div>
<div class="t" style="left:533px;top:765px">ibrewalot</div>
<div class="t" style="left:629px;top:765px">Unrated</div>
<div class="t" style="left:709px;top:765px">0</div>
<svg class="ab" style="left:15px;top:782px" width="8" height="15" viewBox="0 0 8 15">
<rect x="0" y="0" width="8" height="3" fill="#fff"/><rect x="0" y="0" width="2" height="1" fill="#c5cfcf"/><rect x="6" y="0" width="2" height="1" fill="#c5cfcf"/><rect x="0" y="1" width="1" height="2" fill="#dfe5e5"/><rect x="7" y="1" width="1" height="2" fill="#dfe5e5"/>
<rect x="0" y="3" width="8" height="4" fill="#3a2418"/><rect x="1" y="7" width="6" height="7" fill="#3a2418"/>
<rect x="2" y="5" width="1" height="8" fill="#4a3428"/>
<rect x="1" y="14" width="2" height="1" fill="#7a8480"/><rect x="5" y="14" width="2" height="1" fill="#7a8480"/>
</svg>
<div class="t" style="left:29px;top:784px">Porter of a Stout</div>
<div class="t" style="left:213px;top:784px">Extract</div>
<div class="t" style="left:293px;top:784px">Robust Porter</div>
<div class="t" style="left:453px;top:784px">5.00 gal</div>
<div class="t" style="left:533px;top:784px">ibrewalot</div>
<div class="t" style="left:629px;top:784px">Unrated</div>
<div class="t" style="left:709px;top:784px">0</div>
<svg class="ab" style="left:15px;top:801px" width="8" height="15" viewBox="0 0 8 15">
<rect x="0" y="0" width="8" height="3" fill="#fff"/><rect x="0" y="0" width="2" height="1" fill="#c5cfcf"/><rect x="6" y="0" width="2" height="1" fill="#c5cfcf"/><rect x="0" y="1" width="1" height="2" fill="#dfe5e5"/><rect x="7" y="1" width="1" height="2" fill="#dfe5e5"/>
<rect x="0" y="3" width="8" height="4" fill="#5a3412"/><rect x="1" y="7" width="6" height="7" fill="#5a3412"/>
<rect x="2" y="5" width="1" height="8" fill="#6e4a2c"/>
<rect x="1" y="14" width="2" height="1" fill="#7a8480"/><rect x="5" y="14" width="2" height="1" fill="#7a8480"/>
</svg>
<div class="t" style="left:29px;top:803px">Viper&#39;s Oatmeal Stout</div>
<div class="t" style="left:213px;top:803px">Extract</div>
<div class="t" style="left:293px;top:803px">Oatmeal Stout</div>
<div class="t" style="left:453px;top:803px">5.00 gal</div>
<div class="t" style="left:533px;top:803px">ibrewalot</div>
<div class="t" style="left:629px;top:803px">Unrated</div>
<div class="t" style="left:709px;top:803px">0</div>
</body></html>
